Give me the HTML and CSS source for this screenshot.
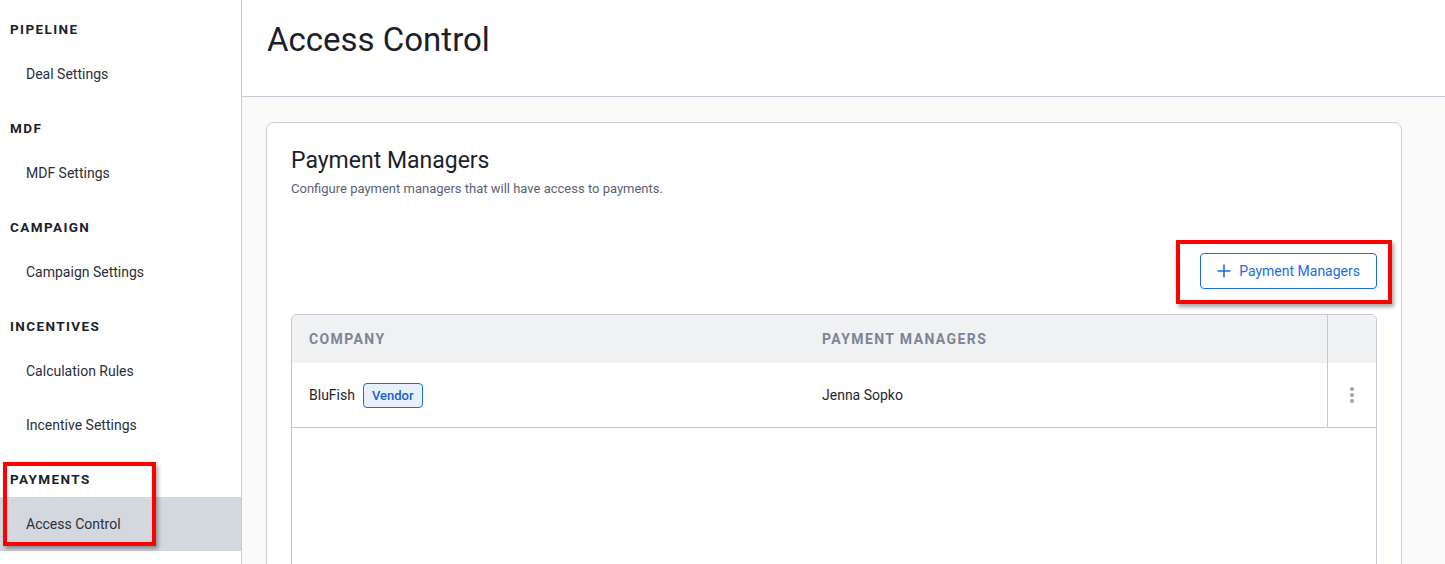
FILE: index.html
```html
<!DOCTYPE html>
<html>

<head>
    <meta charset="utf-8">
    <title>Access Control</title>
    <link rel="stylesheet" href="styles.css">
</head>

<body>
    <div class="app">
        <nav class="sidebar">
            <div class="nav-heading">Pipeline</div>
            <a class="nav-item">Deal Settings</a>

            <div class="nav-heading">MDF</div>
            <a class="nav-item">MDF Settings</a>

            <div class="nav-heading">Campaign</div>
            <a class="nav-item">Campaign Settings</a>

            <div class="nav-heading">Incentives</div>
            <a class="nav-item">Calculation Rules</a>
            <a class="nav-item">Incentive Settings</a>

            <div class="nav-heading">Payments</div>
            <a class="nav-item active">Access Control</a>
        </nav>

        <main class="main">
            <header class="page-header">
                <h1>Access Control</h1>
            </header>

            <div class="content">
                <section class="card">
                    <h2>Payment Managers</h2>
                    <p class="subtitle">Configure payment managers that will have access to payments.</p>

                    <div class="toolbar">
                        <button class="add-button">
                            <svg width="14" height="14" viewBox="0 0 14 14">
                                <path d="M7 0.5V13.5M0.5 7H13.5" stroke="#1a6ee0" stroke-width="1.6" fill="none" />
                            </svg>
                            Payment Managers
                        </button>
                    </div>

                    <div class="table">
                        <div class="table-row table-head">
                            <div class="cell col-company">Company</div>
                            <div class="cell col-managers">Payment Managers</div>
                            <div class="cell col-actions"></div>
                        </div>
                        <div class="table-row">
                            <div class="cell col-company">
                                BluFish <span class="badge">Vendor</span>
                            </div>
                            <div class="cell col-managers">Jenna Sopko</div>
                            <div class="cell col-actions">
                                <span class="kebab"><i></i><i></i><i></i></span>
                            </div>
                        </div>
                        <div class="table-empty"></div>
                    </div>
                </section>
            </div>
        </main>
    </div>

    <div class="mark mark-nav"></div>
    <div class="mark mark-button"></div>
</body>

</html>
```

FILE: styles.css
```css
body {
    margin: 0;
    font-family: Roboto, "Liberation Sans", Arial, sans-serif;
    color: #1f2937;
    overflow: hidden;
}

.app {
    display: flex;
    height: 564px;
}

.sidebar {
    width: 241px;
    flex-shrink: 0;
    border-right: 1px solid #c9cdd4;
    padding-top: 2px;
    display: flex;
    flex-direction: column;
}

.nav-heading {
    height: 45px;
    box-sizing: border-box;
    padding: 18px 0 0 10px;
    line-height: 18px;
    font-size: 13.5px;
    font-weight: 700;
    letter-spacing: 1.4px;
    text-transform: uppercase;
    color: #1b1f2a;
}

.nav-item {
    display: flex;
    align-items: center;
    height: 54px;
    padding-left: 26px;
    font-size: 14px;
    color: #2b2f3a;
}

.nav-item.active {
    background-color: #d3d7de;
}

.main {
    flex: 1;
    display: flex;
    flex-direction: column;
    min-width: 0;
}

.page-header {
    flex-shrink: 0;
    height: 97px;
    box-sizing: border-box;
    padding: 20px 25px 0;
    border-bottom: 1px solid #c5cbd5;
    background: #fff;
}

.page-header h1 {
    margin: 0;
    font-size: 33px;
    font-weight: 400;
    line-height: 40px;
    color: #1b1f2a;
}

.content {
    flex: 1;
    min-height: 0;
    background: #fafafa;
    padding: 25px 43px 0 24px;
}

.card {
    background: #fff;
    border: 1px solid #c9cfd8;
    border-radius: 8px;
    padding: 24px 24px 0;
    height: 600px;
}

.card h2 {
    margin: 0;
    font-size: 23px;
    font-weight: 400;
    line-height: 28px;
    color: #1b1f2a;
}

.subtitle {
    margin: 5px 0 0;
    font-size: 13px;
    line-height: 18px;
    color: #5b6272;
}

.toolbar {
    display: flex;
    justify-content: flex-end;
    margin-top: 55px;
}

.add-button {
    display: flex;
    align-items: center;
    gap: 8px;
    height: 36px;
    padding: 0 16px;
    background: #fff;
    border: 1px solid #1a6ee0;
    border-radius: 4px;
    font-family: inherit;
    font-size: 14px;
    color: #1a6ee0;
}

.table {
    margin-top: 25px;
    border: 1px solid #c3c9d3;
    border-radius: 6px;
    overflow: hidden;
}

.table-row {
    display: flex;
    height: 64px;
    border-bottom: 1px solid #c3c9d3;
}

.table-head {
    height: 48px;
    border-bottom: none;
    background: #f0f1f3;
    font-size: 14px;
    font-weight: 700;
    letter-spacing: 1.4px;
    text-transform: uppercase;
    color: #7c8495;
}

.cell {
    display: flex;
    align-items: center;
    padding-left: 17px;
    box-sizing: border-box;
}

.table-row:not(.table-head) .cell {
    font-size: 14px;
    color: #1f2430;
}

.col-company {
    width: 513px;
}

.col-managers {
    flex: 1;
}

.col-actions {
    width: 49px;
    padding-left: 0;
    justify-content: center;
    border-left: 1px solid #c3c9d3;
}

.badge {
    margin-left: 8px;
    padding: 0 8px;
    height: 23px;
    line-height: 23px;
    border: 1px solid #1a6ee0;
    border-radius: 4px;
    background: #e8f0fd;
    color: #1a5fd0;
    font-size: 13px;
    font-weight: 500;
}

.kebab {
    display: flex;
    flex-direction: column;
    gap: 2px;
}

.kebab i {
    display: block;
    width: 4px;
    height: 4px;
    border-radius: 50%;
    background: #9aa1ad;
}

.table-empty {
    height: 300px;
}

.mark {
    position: absolute;
    border: 4px solid #ff0000;
    box-shadow: 2px 3px 4px rgba(0, 0, 0, 0.35);
    box-sizing: border-box;
}

.mark-nav {
    left: 3px;
    top: 462px;
    width: 153px;
    height: 84px;
}

.mark-button {
    left: 1176px;
    top: 240px;
    width: 216px;
    height: 64px;
}
```
